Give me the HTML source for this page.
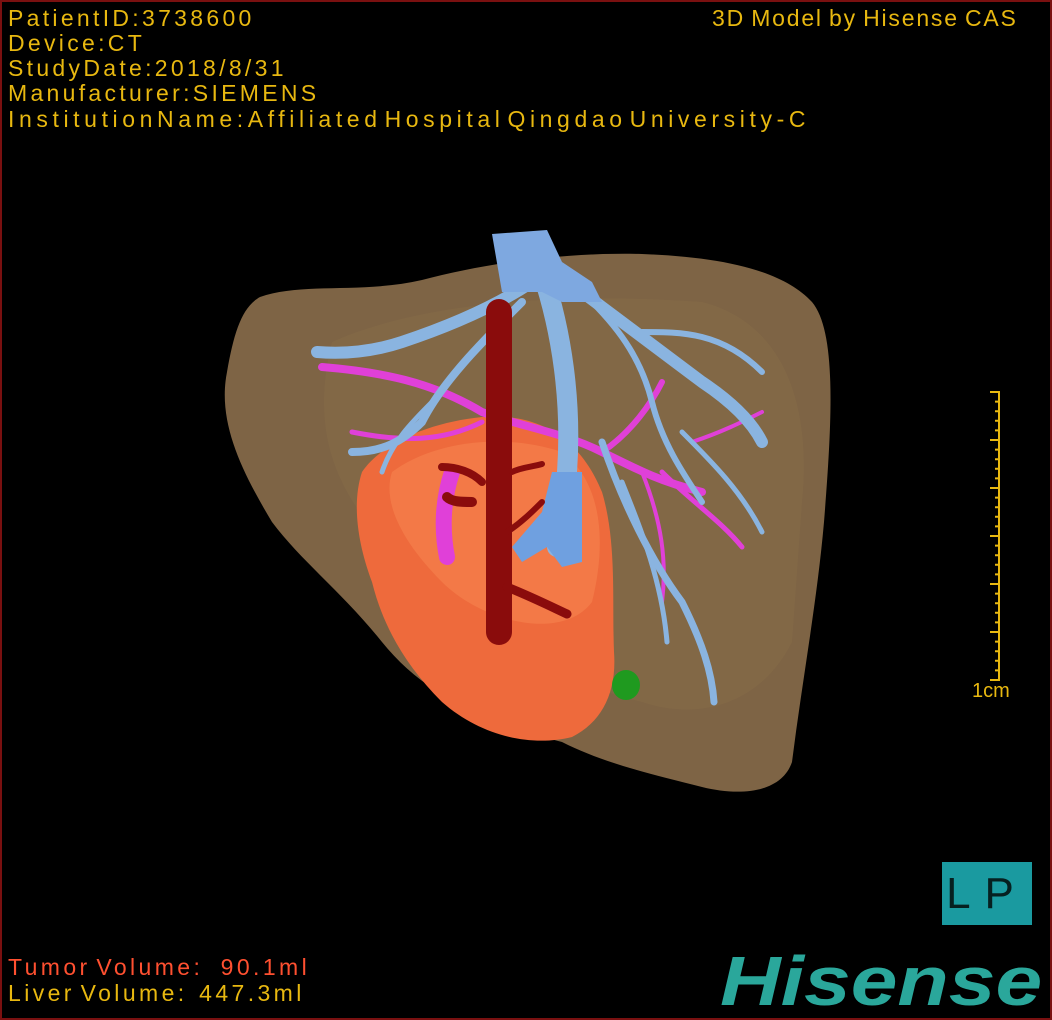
<!DOCTYPE html>
<html><head><meta charset="utf-8"><style>
html,body{margin:0;padding:0;background:#000}
#w{position:relative;width:1048px;height:1016px;border:2px solid #7a1010;overflow:hidden;background:#000}
.t{position:absolute;left:6px;color:#e8b810;font:23px "Liberation Sans",sans-serif;letter-spacing:4px;word-spacing:-8px;white-space:pre;line-height:25px}
</style></head><body><div id="w">
<svg width="1048" height="1016" style="position:absolute;left:0;top:0">
<path d="M258 295 C300 280 360 292 420 278 C480 262 560 250 640 252 C720 255 780 268 810 300 C835 330 830 420 822 520 C815 600 800 680 790 760 C780 790 740 795 700 785 C640 770 600 760 560 740 C480 720 420 690 380 640 C340 590 300 560 270 520 C240 470 215 420 225 370 C232 330 240 305 258 295Z" fill="#7e6445"/>
<path d="M330 340 C420 300 560 290 700 300 C780 320 810 400 800 500 L790 640 C760 700 700 720 640 700 C560 680 480 640 420 580 C360 520 300 460 330 340Z" fill="#856a48" opacity=".6"/>
<path d="M360 470 C380 440 430 420 480 415 C540 410 580 440 600 490 C615 540 610 600 612 650 C615 690 600 720 570 735 C530 745 480 735 440 700 C400 660 380 620 370 580 C355 540 350 500 360 470Z" fill="#ee6a3c"/>
<path d="M390 470 C430 440 500 430 560 450 C600 480 605 540 590 600 C560 640 480 620 440 580 C400 540 380 500 390 470Z" fill="#f5804c" opacity=".7"/>
<g fill="none" stroke="#e040d8" stroke-linecap="round">
<path d="M320 365 C380 370 430 380 480 410 C520 425 560 430 600 450 C640 470 660 480 700 490" stroke-width="8"/>
<path d="M600 450 C630 430 650 400 660 380" stroke-width="6"/>
<path d="M660 470 C690 500 720 520 740 545" stroke-width="5"/>
<path d="M640 470 C660 520 665 560 660 600" stroke-width="4"/>
<path d="M350 430 C400 440 440 440 480 420" stroke-width="5"/>
<path d="M690 440 C720 430 740 420 760 410" stroke-width="4"/>
<path d="M450 470 C440 500 440 530 445 555" stroke-width="16"/>
</g>
<g fill="none" stroke="#8ab4e0" stroke-linecap="round">
<path d="M540 270 C560 330 570 400 565 470 C565 510 560 530 555 545" stroke-width="20"/>
<path d="M530 280 C500 300 460 320 400 340 C370 350 340 352 315 350" stroke-width="12"/>
<path d="M520 300 C480 340 440 380 420 420 C400 440 380 450 350 450" stroke-width="8"/>
<path d="M580 290 C620 320 660 350 700 380 C730 400 750 420 760 440" stroke-width="12"/>
<path d="M590 300 C620 330 640 360 650 400 C660 440 680 470 700 500" stroke-width="6"/>
<path d="M600 440 C620 500 650 560 680 600 C700 640 710 670 712 700" stroke-width="7"/>
<path d="M620 480 C640 530 660 580 665 640" stroke-width="5"/>
<path d="M680 430 C710 460 740 490 760 530" stroke-width="5"/>
<path d="M640 330 C680 330 720 330 760 370" stroke-width="6"/>
<path d="M430 400 C410 420 390 440 380 470" stroke-width="5"/>
</g>
<path d="M490 232 L545 228 L560 260 L590 280 L600 300 L560 300 L540 290 L500 290 Z" fill="#7ea8e0"/>
<path d="M550 470 L580 470 L580 560 L560 565 L545 545 L520 560 L510 545 L540 510 Z" fill="#6fa0e0"/>
<g fill="none" stroke="#8a0c0c" stroke-linecap="round">
<path d="M497 310 L497 630" stroke-width="26"/>
<path d="M505 585 C530 595 550 605 565 612" stroke-width="9"/>
<path d="M480 480 C470 470 455 465 440 465" stroke-width="8"/>
<path d="M470 500 C460 500 450 500 445 495" stroke-width="10"/>
<path d="M510 470 C520 465 530 465 540 462" stroke-width="6"/>
<path d="M505 530 C520 520 530 510 540 500" stroke-width="6"/>
</g>
<ellipse cx="624" cy="683" rx="14" ry="15" fill="#1f9a1f"/>
<line x1="997" y1="389" x2="997" y2="679" stroke="#e8b810" stroke-width="2"/>
<line x1="995" y1="389" x2="995" y2="679" stroke="#e8b810" stroke-width="4" stroke-dasharray="2 7.6"/>
<line x1="991" y1="389" x2="991" y2="679" stroke="#e8b810" stroke-width="6" stroke-dasharray="2 46"/>
</svg>
<div class="t" style="top:4px;letter-spacing:3.3px">PatientID:3738600</div>
<div class="t" style="top:29px;letter-spacing:3.3px">Device:CT</div>
<div class="t" style="top:54px;letter-spacing:3.3px">StudyDate:2018/8/31</div>
<div class="t" style="top:79px;letter-spacing:3.3px">Manufacturer:SIEMENS</div>
<div class="t" style="top:105px;letter-spacing:4.6px">InstitutionName:Affiliated Hospital Qingdao University-C</div>
<div class="t" style="top:4px;left:710px;letter-spacing:1.8px;word-spacing:-2px">3D Model by Hisense CAS</div>
<div class="t" style="top:677px;left:970px;font-size:20px;letter-spacing:0;word-spacing:0">1cm</div>
<div class="t" style="top:953px;color:#ff5030;letter-spacing:3.4px;word-spacing:-4px">Tumor Volume:   90.1ml</div>
<div class="t" style="top:979px;letter-spacing:3.4px;word-spacing:-4px">Liver Volume:  447.3ml</div>
<div style="position:absolute;left:940px;top:860px;width:90px;height:63px;background:#1a9aa0;color:#062020;font:44px 'Liberation Sans',sans-serif;text-align:center;line-height:63px;letter-spacing:14px">LP</div>
<div style="position:absolute;left:718px;top:943px;color:#2aa79b;font:italic bold 70px 'Liberation Sans',sans-serif;letter-spacing:0;line-height:72px;transform:scaleX(1.2);transform-origin:left">Hisense</div>
</div></body></html>
